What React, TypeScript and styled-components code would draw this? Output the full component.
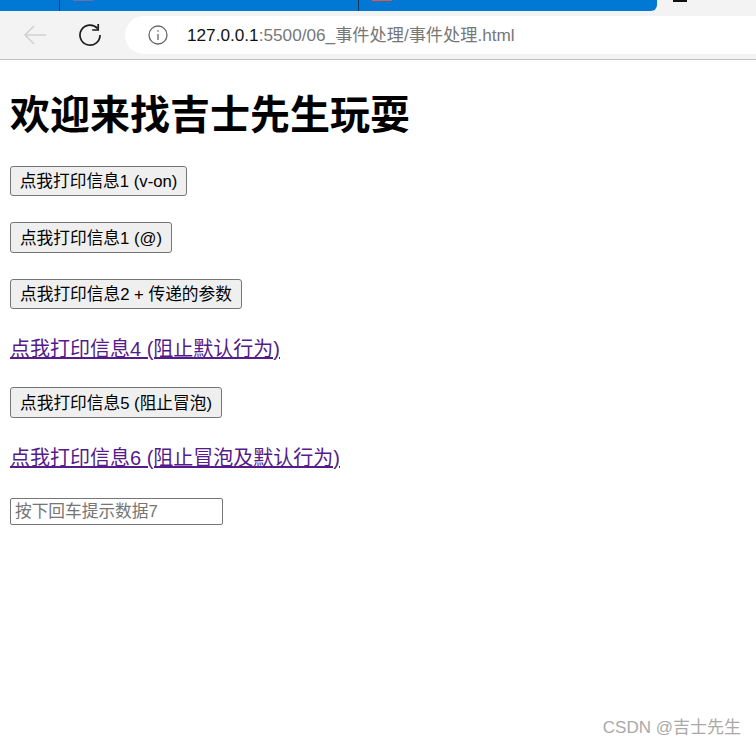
import React from "react";
import styled, { createGlobalStyle } from "styled-components";

const Global = createGlobalStyle`
  html, body { margin: 0; padding: 0; background: #fff; }
  body { width: 756px; height: 743px; overflow: hidden; font-family: "Liberation Sans", "Noto Sans CJK SC", sans-serif; }
`;
const Page = styled.div`position: relative; width: 756px; height: 743px; overflow: hidden;`;
const Browser = styled.header`display: flex; flex-direction: column; height: 60px; background: #f3f3f3; border-bottom: 1px solid #c2c2c2; box-sizing: border-box;`;
const TabStrip = styled.div`display: flex; height: 11px; flex: none;`;
const ActiveTabs = styled.div`display: flex; width: 657px; height: 11px; background: #0078d4; border-bottom-right-radius: 6px;`;
const TabSlot = styled.div<{ $w: number }>`width: ${(p) => p.$w}px; flex: none; border-right: 1px solid #10395c; box-sizing: border-box; padding-left: ${(p) => (p.$w > 100 ? 13 : 0)}px;`;
const Favicon = styled.div<{ $c: string }>`width: 20px; height: 1px; background: ${(p) => p.$c};`;
const TabRest = styled.div`flex: 1; padding-left: 13px;`;
const Minimize = styled.div`width: 14px; height: 2px; margin-left: 16px; background: #111;`;
const Toolbar = styled.div`display: flex; align-items: center; height: 48px; padding-bottom: 1px; box-sizing: border-box;`;
const IconSlot = styled.div<{ $w: number }>`width: ${(p) => p.$w}px; display: flex; justify-content: center; flex: none;`;
const Omnibox = styled.div`flex: 1; height: 38px; margin-left: 15px; display: flex; align-items: center; background: #fff; border-radius: 19px 0 0 19px; padding-left: 23px;`;
const Url = styled.span`margin-left: 19px; margin-top: -2px; font: 17.2px "Liberation Sans", "Noto Sans CJK SC", sans-serif; color: #777; white-space: nowrap;`;
const Host = styled.span`color: #111;`;
const Content = styled.main`padding: 0 10px; display: flex; flex-direction: column; align-items: flex-start;`;
const Title = styled.h1`margin: 27px 0 29px; font-size: 40px; line-height: 50px; font-weight: 700; color: #000; font-family: "Noto Sans CJK SC", sans-serif; white-space: nowrap;`;
const Row = styled.div<{ $mb: number }>`margin-bottom: ${(p) => p.$mb}px; display: flex;`;
const Btn = styled.button<{ $w: number; $h: number }>`width: ${(p) => p.$w}px; height: ${(p) => p.$h}px; padding: 0 0 2px; margin: 0; background: #efefef; border: 1px solid #767676; border-radius: 3px; font: 16.7px "Liberation Sans", "Noto Sans CJK SC", sans-serif; color: #000; white-space: nowrap;`;
const Link = styled.a`display: block; height: 26px; font-size: 20px; line-height: 28px; color: #551a8b; text-decoration: underline; white-space: nowrap;`;
const Field = styled.input`width: 213px; height: 27px; box-sizing: border-box; padding: 0 4px; margin: 0; border: 1px solid #767676; border-radius: 2px; font: 16.7px "Liberation Sans", "Noto Sans CJK SC", sans-serif; &::placeholder { color: #757575; }`;
const Watermark = styled.div`position: absolute; right: 15px; top: 713px; font: 17px "Liberation Sans", "Noto Sans CJK SC", sans-serif; color: #a9a9a9; white-space: nowrap;`;

export default function App() {
  return (
    <Page>
      <Global />
      <Browser>
        <TabStrip>
          <ActiveTabs>
            <TabSlot $w={60} />
            <TabSlot $w={299}><Favicon $c="#6a6fa8" /></TabSlot>
            <TabRest><Favicon $c="#e8593a" /></TabRest>
          </ActiveTabs>
          <Minimize />
        </TabStrip>
        <Toolbar>
          <IconSlot $w={70}>
            <svg width="24" height="22" viewBox="0 0 24 22" fill="none" stroke="#d2d2d2" strokeWidth="1.6"><path d="M23 11H2M11 2l-9 9 9 9" /></svg>
          </IconSlot>
          <IconSlot $w={40}>
            <svg width="24" height="24" viewBox="0 0 24 24" fill="none" stroke="#1c1c1c" strokeWidth="1.7"><path d="M19.5 5.5A10 10 0 1 0 22 12" /><path d="M20.2 1v6h-6" /></svg>
          </IconSlot>
          <Omnibox>
            <svg width="20" height="20" viewBox="0 0 20 20" fill="none" stroke="#666" strokeWidth="1.3"><circle cx="10" cy="10" r="9" /><path d="M10 9v6" /><path d="M10 5.2v1.6" /></svg>
            <Url><Host>127.0.0.1</Host>:5500/06_事件处理/事件处理.html</Url>
          </Omnibox>
        </Toolbar>
      </Browser>
      <Content>
        <Title>欢迎来找吉士先生玩耍</Title>
        <Row $mb={26}><Btn $w={177} $h={30}>点我打印信息1 (v-on)</Btn></Row>
        <Row $mb={26}><Btn $w={162} $h={31}>点我打印信息1 (@)</Btn></Row>
        <Row $mb={26}><Btn $w={232} $h={30}>点我打印信息2 + 传递的参数</Btn></Row>
        <Row $mb={26}><Link href="#">点我打印信息4 (阻止默认行为)</Link></Row>
        <Row $mb={26}><Btn $w={212} $h={31}>点我打印信息5 (阻止冒泡)</Btn></Row>
        <Row $mb={28}><Link href="#">点我打印信息6 (阻止冒泡及默认行为)</Link></Row>
        <Field placeholder="按下回车提示数据7" />
      </Content>
      <Watermark>CSDN @吉士先生</Watermark>
    </Page>
  );
}
